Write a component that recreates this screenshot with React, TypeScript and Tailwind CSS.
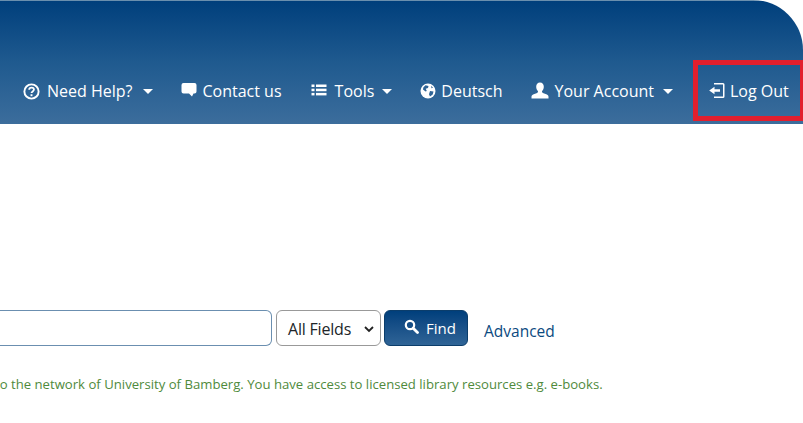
import React from 'react';

const font = { fontFamily: '"Open Sans", "Noto Sans", sans-serif' };

function Caret() {
  return <span className="mt-[1px] h-0 w-0 shrink-0 border-x-[5px] border-t-[5px] border-x-transparent border-t-white" />;
}

function HelpIcon() {
  return (
    <svg className="shrink-0" width="17" height="17" viewBox="0 0 16 16" fill="none" stroke="white">
      <circle cx="8" cy="8" r="6.700" strokeWidth="1.800" />
      <path d="M5.800 6.400c0-1.300 1-2.100 2.300-2.100s2.200.8 2.200 1.900c0 1.700-2.300 1.700-2.300 3.300" strokeWidth="1.700" />
      <rect x="7.100" y="10.600" width="1.800" height="1.800" fill="white" stroke="none" />
    </svg>
  );
}

function CommentIcon() {
  return (
    <svg className="mb-[3px] shrink-0" width="16" height="16" viewBox="0 0 16 16" fill="white">
      <path d="M2.500 1h11A2 2 0 0 1 15.500 3v6.500a2 2 0 0 1-2 2H12.500L11 14.500 8 11.500H2.500a2 2 0 0 1-2-2V3a2 2 0 0 1 2-2z" />
    </svg>
  );
}

function ListIcon() {
  return (
    <svg className="mb-[2px] shrink-0" width="16" height="14" viewBox="0 0 16 14" fill="white">
      <rect x="0.500" y="1.500" width="3" height="2.500" />
      <rect x="0.500" y="5.700" width="3" height="2.500" />
      <rect x="0.500" y="9.900" width="3" height="2.500" />
      <rect x="5" y="1.500" width="10.500" height="2.500" />
      <rect x="5" y="5.700" width="10.500" height="2.500" />
      <rect x="5" y="9.900" width="10.500" height="2.500" />
    </svg>
  );
}

function GlobeIcon() {
  return (
    <svg className="shrink-0" width="16" height="16" viewBox="0 0 16 16">
      <circle cx="8" cy="8" r="7.500" fill="white" />
      <path d="M5.500 2.200 8.500 3l-.5 2-2.300.8L6.800 8 5.500 8.500 3 6.500 3.300 4.500zM10 8l3.500.5-.8 3-2.700 2-1-2.200zM11 2.700l2 2-1.500.5z" fill="#2f6496" />
    </svg>
  );
}

function UserIcon() {
  return (
    <svg className="mb-[2px] shrink-0" width="18" height="17" viewBox="0 0 18 16" fill="white">
      <path d="M9 0c2.400 0 3.800 1.800 3.800 4.200 0 1.800-.7 3.400-1.700 4.300-.3.800 0 1.500.8 1.900l4 1.600c1 .4 1.600 1.200 1.600 2.500V16H.5v-1.500c0-1.300.6-2.100 1.600-2.500l4-1.600c.8-.4 1.100-1.100.8-1.900-1-.9-1.700-2.500-1.700-4.300C5.200 1.800 6.600 0 9 0z" />
    </svg>
  );
}

function LogInIcon() {
  return (
    <svg className="shrink-0" width="16" height="17" viewBox="0 0 16 17" fill="white">
      <path d="M5 1h9a1.500 1.500 0 0 1 1.500 1.500v12A1.500 1.500 0 0 1 14 16H5v-1.500h9v-12H5z" />
      <path d="M5.500 4.700.2 8.500l5.300 3.800V9.700H11V7.300H5.500z" />
    </svg>
  );
}

function SearchIcon() {
  return (
    <svg className="mb-[4px] shrink-0" width="15" height="15" viewBox="0 0 15 15" fill="none" stroke="white">
      <circle cx="6" cy="6" r="4.200" strokeWidth="2.200" />
      <path d="M9.200 9.200 13.500 13.500" strokeWidth="2.800" strokeLinecap="round" />
    </svg>
  );
}

export default function App() {
  return (
    <div className="h-[423px] w-[803px] overflow-hidden bg-white" style={font}>
      {/* Header */}
      <header className="flex h-[124px] items-end rounded-tr-[50px] bg-[linear-gradient(#6a8fae_1px,#003f7c_1px,#1f5a8f_50%,#3c6d9c)] text-[16px] text-white">
        <nav className="flex h-[66px] w-full items-center whitespace-nowrap pl-[23px]">
          <a className="flex items-center"><HelpIcon /><span className="ml-[7px]">Need Help?</span><span className="ml-[11px] flex"><Caret /></span></a>
          <a className="ml-[28px] flex items-center gap-[5px]"><CommentIcon />Contact us</a>
          <a className="ml-[29px] flex items-center"><ListIcon /><span className="ml-[8px]">Tools</span><span className="ml-[8px] flex"><Caret /></span></a>
          <a className="ml-[28px] flex items-center gap-[5px]"><GlobeIcon />Deutsch</a>
          <a className="ml-[28px] flex items-center"><UserIcon /><span className="ml-[6px]">Your Account</span><span className="ml-[9px] flex"><Caret /></span></a>
          <div className="mb-[3px] ml-[20px] flex h-[61px] w-[110px] shrink-0 items-center gap-[5px] self-end border-[5px] border-r-[3px] border-[#e21f2d] pl-[11px]">
            <LogInIcon />Log Out
          </div>
        </nav>
      </header>

      {/* Search */}
      <div className="mt-[186px] flex items-center">
        <div className="h-[36px] w-[272px] rounded-r-[6px] border border-l-0 border-[#6b8fb0] bg-white" />
        <div className="ml-[4px] flex h-[36px] w-[105px] items-center justify-between rounded-[6px] border border-[#999] pl-[11px] pr-[5px] pt-[1px] text-[16px] tracking-[-0.2px] text-[#212529]">
          All Fields
          <svg width="12" height="12" viewBox="0 0 12 12" fill="none" stroke="#222" strokeWidth="1.800">
            <path d="M2 4l4 4 4-4" />
          </svg>
        </div>
        <button className="ml-[3px] flex h-[36px] w-[84px] items-center justify-center gap-[7px] rounded-[6px] border border-[#0b3d6b] bg-gradient-to-b from-[#003f7c] to-[#2f6496] pl-[8px] text-[15px] text-white">
          <SearchIcon />Find
        </button>
        <a className="ml-[16px] mt-[8px] text-[15.500px] text-[#0b4a80]">Advanced</a>
      </div>

      <p className="ml-[-5px] mt-[29px] whitespace-nowrap text-[13.150px] text-[#4f8a3c]">
        to the network of University of Bamberg. You have access to licensed library resources e.g. e-books.
      </p>
    </div>
  );
}
